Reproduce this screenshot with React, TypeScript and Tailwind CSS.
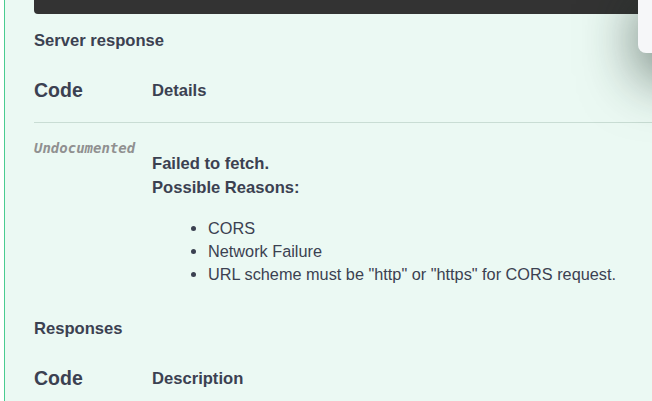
import React from 'react';

const reasons = ['CORS', 'Network Failure', 'URL scheme must be "http" or "https" for CORS request.'];

function HeaderRow({ second }: { second: string }) {
  return (
    <div className="flex h-[40px] items-center">
      <div className="w-[118px] text-[19.5px] font-bold">Code</div>
      <div className="text-[16.6px] font-bold">{second}</div>
    </div>
  );
}

export default function App() {
  return (
    <div className="relative h-[401px] w-[652px] overflow-hidden bg-white font-['Liberation_Sans',Arial,sans-serif] text-[#3b4151]">
      <div className="ml-[4px] h-full border-l border-[#49cc90] bg-[#ebf9f3] pl-[29px]">
        {/* bottom of the curl output box */}
        <div className="h-[14px] rounded-bl-[4px] bg-[#333333]" />

        <div className="mt-[17px] h-[20px] text-[16.6px] font-bold leading-[20px]">Server response</div>

        <div className="mt-[20px] border-b border-[#c9ddd4] pb-[11px]">
          <HeaderRow second="Details" />
        </div>

        <div className="flex">
          <div className="w-[118px] pt-[17px] font-['DejaVu_Sans_Mono',monospace] text-[14px] font-bold italic leading-[16px] text-[#909090]">
            Undocumented
          </div>
          <div className="pt-[29px]">
            <div className="text-[16.6px] font-bold leading-[24px]">Failed to fetch.</div>
            <div className="text-[16.6px] font-bold leading-[24px]">Possible Reasons:</div>
            <ul className="mt-[17px] list-disc pl-[56px] text-[16.3px] leading-[23px]">
              {reasons.map((r) => (
                <li key={r}>{r}</li>
              ))}
            </ul>
          </div>
        </div>

        <div className="mt-[33px] h-[20px] text-[16.6px] font-bold leading-[20px]">Responses</div>

        <div className="mt-[20px]">
          <HeaderRow second="Description" />
        </div>
      </div>

      {/* toast sitting over the page */}
      <div className="absolute left-[638px] top-[-20px] h-[73px] w-[120px] rounded-bl-[8px] bg-[#f6f7f9] shadow-[0_24px_56px_rgba(20,40,30,0.6)]" />
    </div>
  );
}
